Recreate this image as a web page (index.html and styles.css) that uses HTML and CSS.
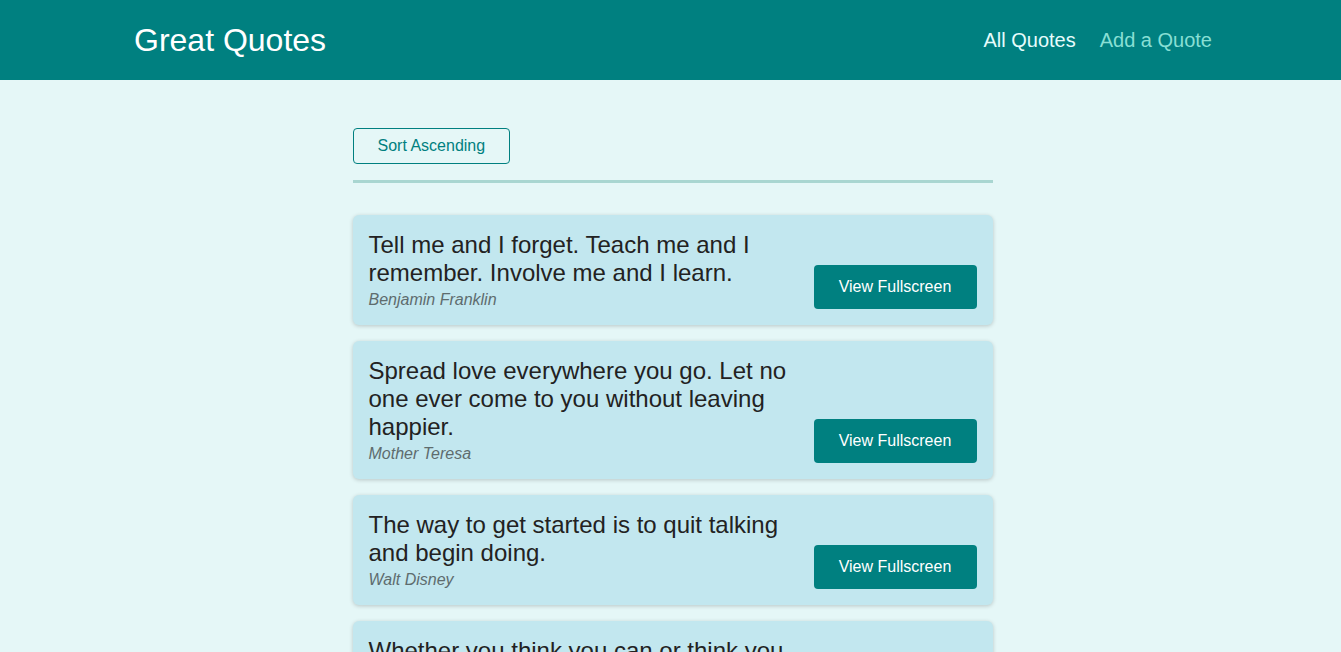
FILE: index.html
```html
<!DOCTYPE html>
<html lang="en">
<head>
<meta charset="utf-8">
<title>Great Quotes</title>
<link rel="stylesheet" href="styles.css">
</head>
<body>
<header class="header">
  <div class="logo">Great Quotes</div>
  <nav class="nav">
    <a class="nav-link active" href="#">All Quotes</a>
    <a class="nav-link" href="#">Add a Quote</a>
  </nav>
</header>
<main class="main">
  <div class="sorting">
    <button class="sort-btn">Sort Ascending</button>
  </div>
  <ul class="list">
    <li class="item">
      <figure class="quote">
        <blockquote class="quote-text">Tell me and I forget. Teach me and I remember. Involve me and I learn.</blockquote>
        <figcaption class="author">Benjamin Franklin</figcaption>
      </figure>
      <a class="view-btn" href="#">View Fullscreen</a>
    </li>
    <li class="item">
      <figure class="quote">
        <blockquote class="quote-text">Spread love everywhere you go. Let no one ever come to you without leaving happier.</blockquote>
        <figcaption class="author">Mother Teresa</figcaption>
      </figure>
      <a class="view-btn" href="#">View Fullscreen</a>
    </li>
    <li class="item">
      <figure class="quote">
        <blockquote class="quote-text">The way to get started is to quit talking and begin doing.</blockquote>
        <figcaption class="author">Walt Disney</figcaption>
      </figure>
      <a class="view-btn" href="#">View Fullscreen</a>
    </li>
    <li class="item">
      <figure class="quote">
        <blockquote class="quote-text">Whether you think you can or think you can't, you're right.</blockquote>
        <figcaption class="author">Henry Ford</figcaption>
      </figure>
      <a class="view-btn" href="#">View Fullscreen</a>
    </li>
  </ul>
</main>
</body>
</html>
```
FILE: styles.css
```css
* { box-sizing: border-box; }
html, body {
  margin: 0;
  padding: 0;
}
body {
  font-family: "Liberation Sans", Arial, sans-serif;
  background: #e5f7f7;
  color: #222;
}
.header {
  height: 80px;
  background: #008080;
  display: flex;
  align-items: center;
  justify-content: space-between;
  padding: 0 129px 0 134px;
}
.logo {
  color: #fff;
  font-size: 32px;
  line-height: 1;
}
.nav {
  display: flex;
  gap: 24px;
}
.nav-link {
  font-size: 20px;
  color: #88dfd4;
  text-decoration: none;
}
.nav-link.active {
  color: #e6fcfc;
}
.main {
  width: 640px;
  margin: 48px auto 0;
  position: relative;
  left: 2px;
}
.sorting {
  padding-bottom: 16px;
  border-bottom: 3px solid #a9d6d1;
  margin-bottom: 32px;
}
.sort-btn {
  font-family: inherit;
  font-size: 16px;
  line-height: 18px;
  padding: 8px 24px;
  background: transparent;
  color: #008080;
  border: 1px solid #008080;
  border-radius: 4px;
  cursor: pointer;
}
.list {
  list-style: none;
  margin: 0;
  padding: 0;
  display: flex;
  flex-direction: column;
  gap: 16px;
}
.item {
  display: flex;
  align-items: flex-end;
  justify-content: space-between;
  gap: 16px;
  background: #c2e7ef;
  border-radius: 6px;
  padding: 16px;
  box-shadow: 0 1px 4px rgba(0, 0, 0, 0.2);
}
.quote {
  margin: 0;
  flex: 1;
}
.quote-text {
  margin: 0;
  font-size: 24px;
  line-height: 28px;
  color: #222;
}
.author {
  margin-top: 4px;
  font-size: 16px;
  line-height: 18px;
  font-style: italic;
  color: #5e6c6e;
}
.view-btn {
  flex: none;
  display: block;
  width: 163px;
  height: 44px;
  line-height: 44px;
  text-align: center;
  background: #008080;
  color: #fff;
  font-size: 16px;
  text-decoration: none;
  border-radius: 4px;
}
```
